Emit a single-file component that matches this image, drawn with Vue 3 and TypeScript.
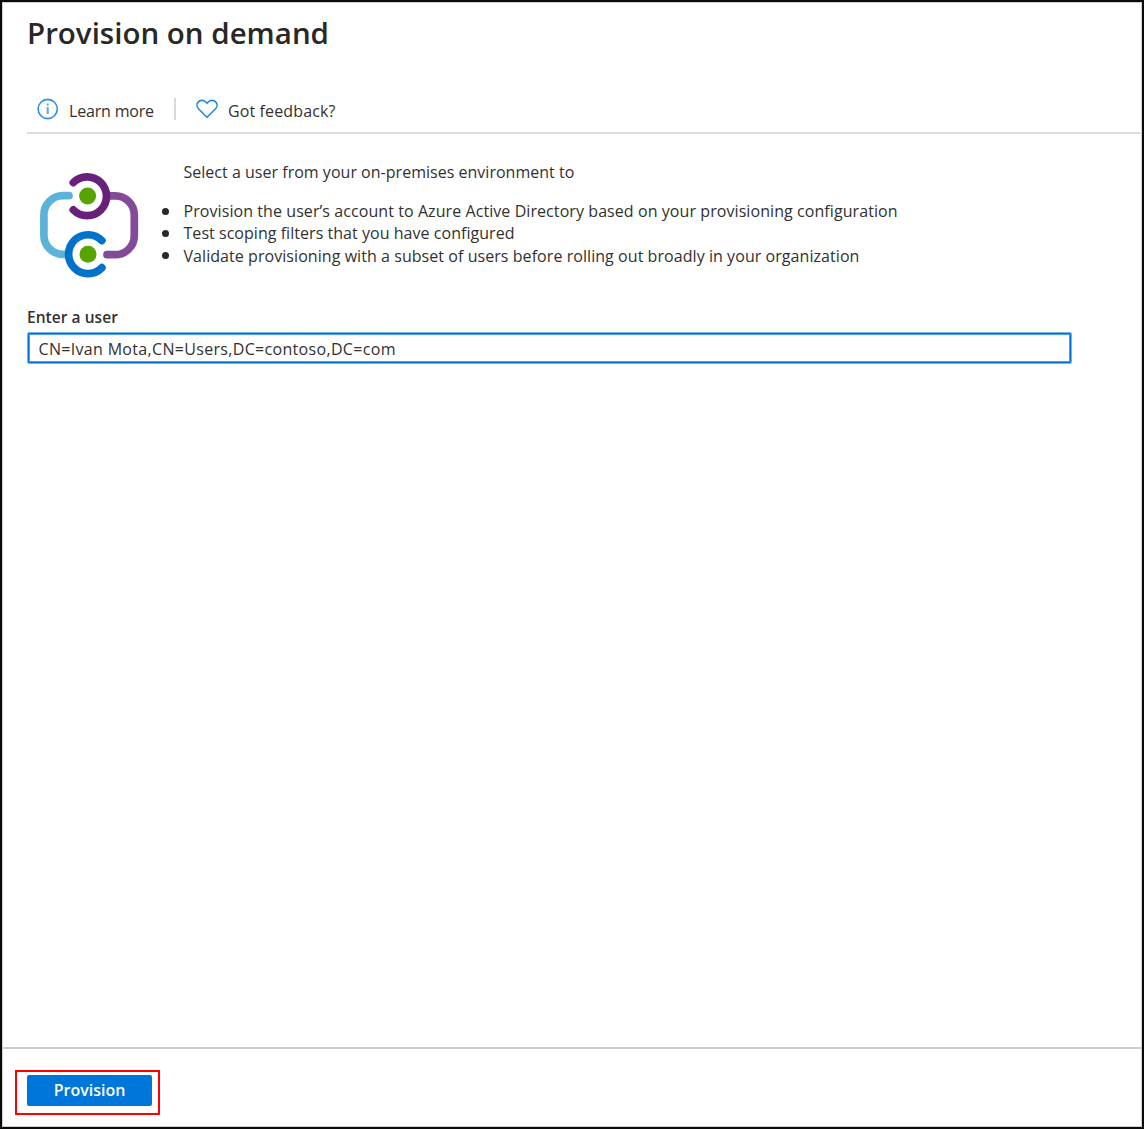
<script setup lang="ts">
import { ref } from 'vue'

const user = ref<string>('CN=Ivan Mota,CN=Users,DC=contoso,DC=com')

const steps: { text: string; spacing: string }[] = [
  { text: 'Provision the user’s account to Azure Active Directory based on your provisioning configuration', spacing: '0.075px' },
  { text: 'Test scoping filters that you have configured', spacing: '0.04px' },
  { text: 'Validate provisioning with a subset of users before rolling out broadly in your organization', spacing: '0.06px' },
]
</script>

<template>
  <div class="blade">
    <h1>Provision on demand</h1>
    <div class="toolbar">
      <a class="command">
        <svg width="22" height="22" viewBox="0 0 22 22" fill="none" stroke="#2f8fe0">
          <circle cx="10.7" cy="11" r="9.6" stroke-width="1.6" />
          <path d="M10.7 9v7" stroke-width="2" stroke="#5aa7e8" />
          <path d="M10.7 5.6v2" stroke-width="2" stroke="#5aa7e8" />
        </svg>
        <span class="learn">Learn more</span>
      </a>
      <i class="divider"></i>
      <a class="command">
        <svg width="22" height="22" viewBox="0 0 22 22" fill="none" stroke="#1f88dd" stroke-width="1.6" stroke-linejoin="round">
          <path d="M11 19.3 2.4 10.8C.6 8.9.5 5.8 2.3 3.9 4.2 1.9 7.6 1.8 9.5 3.7L11 5.3 12.5 3.7C14.4 1.8 17.8 1.9 19.7 3.9 21.5 5.8 21.4 8.9 19.6 10.8Z" />
        </svg>
        <span class="feedback">Got feedback?</span>
      </a>
    </div>

    <section class="intro">
      <svg class="logo" width="104" height="110" viewBox="36 170 104 110" fill="none" stroke-width="7.7" stroke-linecap="round">
        <path d="M69 195.7H63A19 19 0 0 0 43.9 214.7V235.3A19 19 0 0 0 63 254.3H68" stroke="#5cb3da" />
        <path d="M107 195.9H115.3A19 19 0 0 1 134.3 214.9V235.7A19 19 0 0 1 115.3 254.7H107" stroke="#824a98" />
        <path d="M73.3 182.6A19.4 19.4 0 1 1 73.3 209.9" stroke="#68217a" />
        <path d="M101.9 240.6A19.4 19.4 0 1 0 101.9 267.7" stroke="#0072c9" />
        <circle cx="87.6" cy="196" r="8.5" fill="#57a300" stroke="none" />
        <circle cx="88" cy="254.3" r="8.5" fill="#57a300" stroke="none" />
      </svg>
      <div class="copy">
        <p>Select a user from your on-premises environment to</p>
        <ul>
          <li v-for="step in steps" :key="step.text">
            <span :style="{ letterSpacing: step.spacing }">{{ step.text }}</span>
          </li>
        </ul>
      </div>
    </section>

    <label for="user">Enter a user</label>
    <input id="user" v-model="user" type="text" spellcheck="false" />

    <footer>
      <div class="highlight">
        <button type="button">Provision</button>
      </div>
    </footer>
  </div>
</template>

<style>
body {
  margin: 0;
}
</style>

<style scoped>
.blade {
  box-sizing: border-box;
  display: flex;
  flex-direction: column;
  width: 1144px;
  height: 1129px;
  border: 2px solid #0a0a0a;
  box-shadow: inset 0 0 0 1px #d0d0d0;
  background: #fff;
  color: #323130;
  font: 16px/22px "Open Sans", "Noto Sans", sans-serif;
  white-space: nowrap;
}
h1 {
  margin: 11px 0 0 25px;
  height: 40px;
  font-size: 29.5px;
  line-height: 40px;
  font-weight: 600;
  color: #292827;
}
.toolbar {
  display: flex;
  align-items: center;
  height: 46px;
  margin: 33px 0 0 25px;
  padding-left: 10px;
  border-bottom: 2px solid #dcdcdc;
}
.command {
  display: flex;
  align-items: center;
  gap: 10px;
}
.command svg {
  margin-top: -1px;
}
.command span {
  padding-top: 3px;
}
.learn {
  letter-spacing: -0.18px;
}
.feedback {
  letter-spacing: 0.14px;
}
.divider {
  width: 2px;
  height: 22px;
  margin: 0 20px;
  background: #d9d9d9;
}
.intro {
  display: flex;
  height: 172px;
}
.logo {
  margin: 36px 0 0 34px;
}
.copy {
  margin: 27px 0 0 43.5px;
}
p {
  margin: 0 0 17px;
  letter-spacing: 0.02px;
}
ul {
  margin: 0;
  padding: 0;
  list-style: none;
}
li {
  display: flex;
  align-items: center;
  height: 22.3px;
}
li::before {
  content: "";
  width: 7px;
  height: 7px;
  margin: 0 15px 0 -22px;
  border-radius: 50%;
  background: #292827;
}
label {
  margin-left: 25px;
  height: 26px;
  line-height: 22px;
  font-size: 15.5px;
  font-weight: 600;
  letter-spacing: 0.05px;
}
input {
  box-sizing: border-box;
  width: 1045px;
  height: 32px;
  margin-left: 25px;
  padding: 1px 9px 0 10.5px;
  border: 1px solid #72b3ea;
  border-radius: 2px;
  box-shadow: inset 0 0 0 1px #006fd6, inset 0 0 0 2px #4c9fe4;
  outline: none;
  background: #fff;
  color: #323130;
  font: inherit;
  letter-spacing: 0.32px;
}
footer {
  box-sizing: border-box;
  height: 80px;
  margin-top: auto;
  padding: 21px 0 0 13px;
  border-top: 2px solid #ccc;
}
.highlight {
  box-sizing: border-box;
  width: 145px;
  height: 45px;
  padding: 3px 0 0 10px;
  border: 2px solid #f00;
}
button {
  display: block;
  width: 125px;
  height: 31px;
  padding: 0;
  border: 0;
  border-radius: 2px;
  background: #0075da;
  color: #fff;
  font: 600 16px/29px "Open Sans", "Noto Sans", sans-serif;
}
</style>
